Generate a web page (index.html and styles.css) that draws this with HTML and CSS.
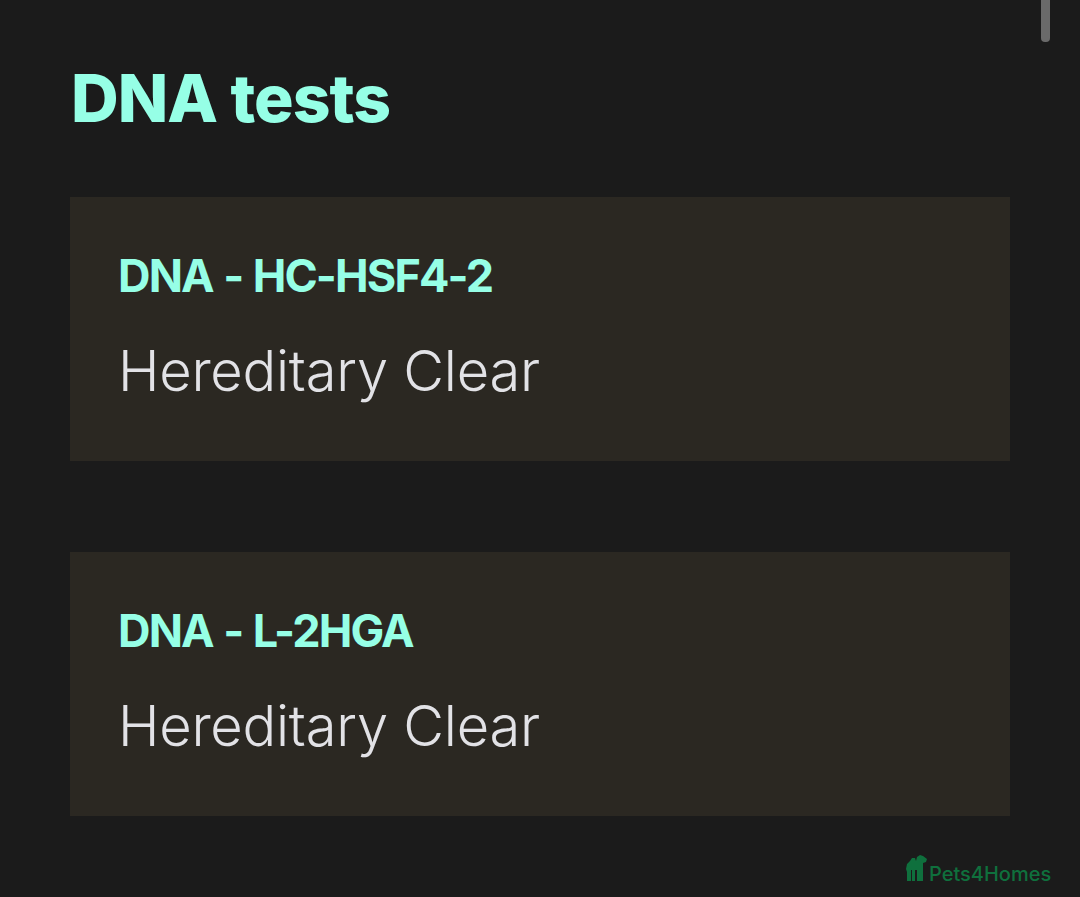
FILE: index.html
```html
<!DOCTYPE html>
<html lang="en">
<head>
<meta charset="utf-8">
<title>DNA tests</title>
<link rel="stylesheet" href="styles.css">
</head>
<body>
<main class="page">
  <h1 class="heading">DNA tests</h1>
  <section class="card">
    <h2 class="card-title">DNA - HC-HSF4-2</h2>
    <p class="card-text">Hereditary Clear</p>
  </section>
  <section class="card">
    <h2 class="card-title">DNA - L-2HGA</h2>
    <p class="card-text">Hereditary Clear</p>
  </section>
</main>
<div class="scroll-thumb"></div>
<div class="watermark">
  <svg class="logo" viewBox="0 0 22 27" width="22" height="27" aria-hidden="true">
    <path fill="#0f703d" d="M0 14 L1 9 L4 6 L6 3 L9 3 L10 6 L11 2 L14 0 L17 1 L21 4 L20 7 L17 8 L17 14 L17 26 L11 26 L11 15 L9 15 L9 26 L6 26 L6 15 L5 15 L5 26 L1 26 L1 17 Z"/>
  </svg>
  <span class="brand">Pets4Homes</span>
</div>
</body>
</html>
```
FILE: styles.css
```css
* { box-sizing: border-box; }
html, body { margin: 0; height: 100%; overflow: hidden; }
body {
  background: #1b1b1b;
  font-family: Inter, "Liberation Sans", sans-serif;
  position: relative;
}
.page { padding: 60px 70px 0; }
.heading {
  margin: 0 0 60px 1px;
  font-size: 66px;
  line-height: 77px;
  font-weight: 800;
  letter-spacing: -1px;
  color: #96ffe6;
}
.card {
  background: #2b2822;
  height: 264px;
  padding: 50px 48px 0;
  margin-bottom: 91px;
}
.card-title {
  margin: 0;
  font-size: 45px;
  line-height: 58px;
  font-weight: 700;
  letter-spacing: -1.85px;
  word-spacing: 1.5px;
  color: #96ffe6;
}
.card-text {
  margin: 27px 0 0;
  font-size: 56px;
  line-height: 78px;
  font-weight: 350;
  letter-spacing: -0.25px;
  color: #e2e2e6;
}
.scroll-thumb {
  position: absolute;
  top: 0;
  left: 1041px;
  width: 9px;
  height: 42px;
  background: #6a6a6a;
  border-radius: 0 0 4px 4px;
}
.watermark {
  position: absolute;
  left: 906px;
  top: 855px;
  display: flex;
  align-items: flex-end;
}
.logo { display: block; }
.brand {
  font-size: 20px;
  line-height: 24px;
  font-weight: 500;
  color: #0f703d;
  margin-left: 1px;
  margin-bottom: -4px;
}
```
